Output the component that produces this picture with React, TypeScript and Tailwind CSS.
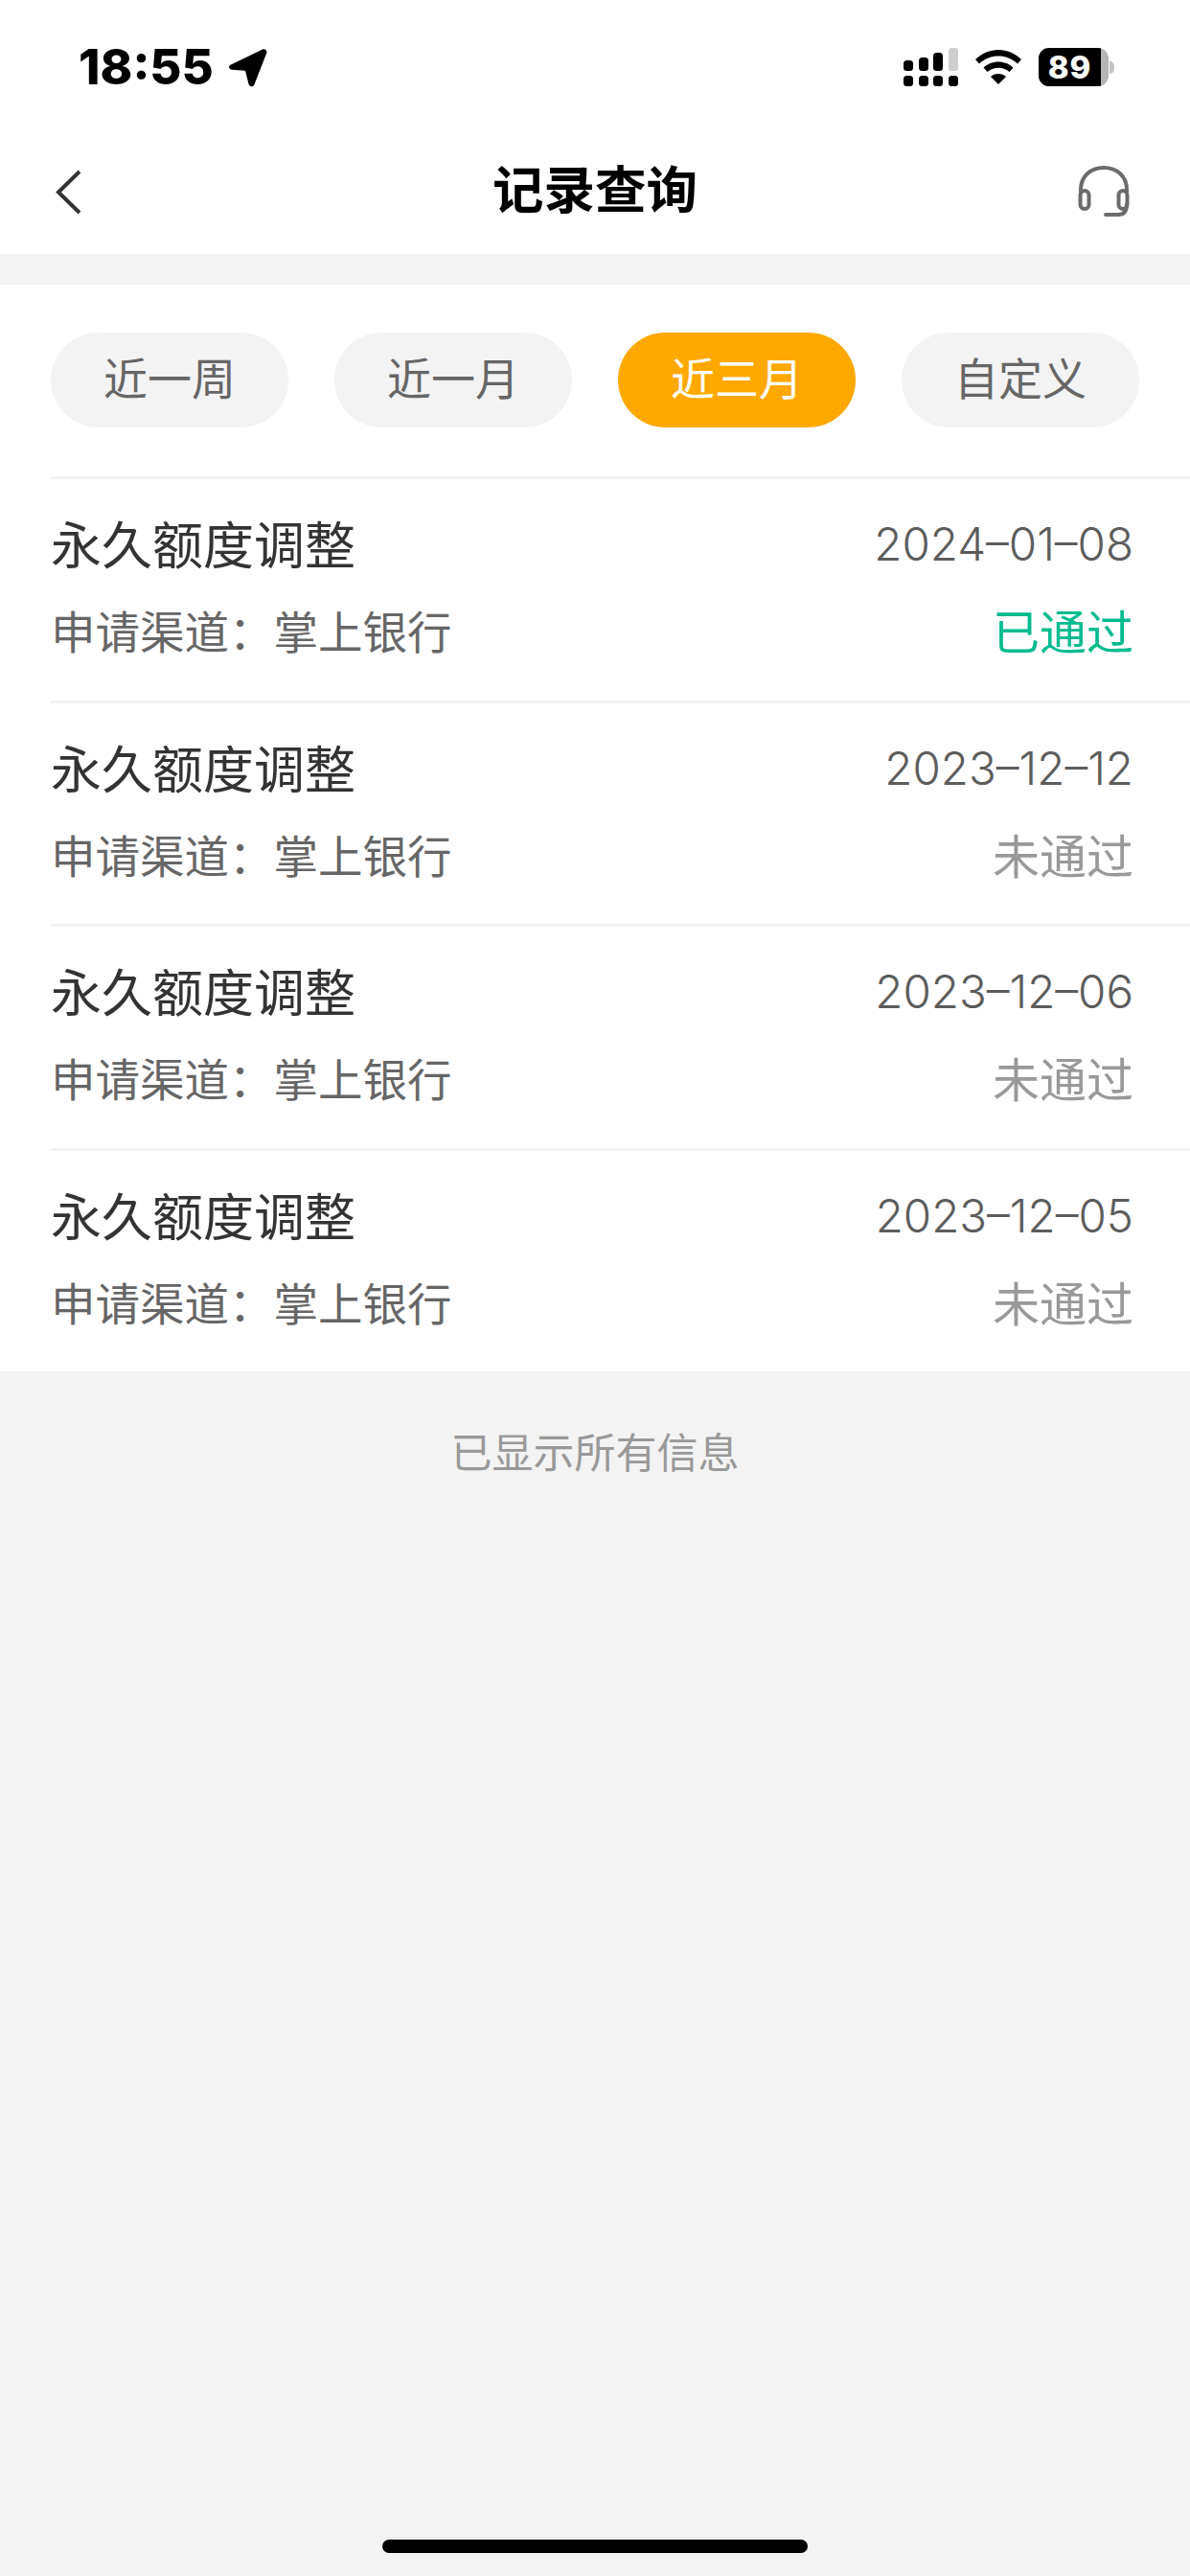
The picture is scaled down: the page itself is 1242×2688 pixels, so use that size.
const cjk = "font-['Liberation_Sans','Noto_Sans_CJK_SC',sans-serif]"

const tabs = [
  { label: '近一周', active: false },
  { label: '近一月', active: false },
  { label: '近三月', active: true },
  { label: '自定义', active: false },
]

const records = [
  { date: '2024–01–08', status: '已通过', passed: true },
  { date: '2023–12–12', status: '未通过', passed: false },
  { date: '2023–12–06', status: '未通过', passed: false },
  { date: '2023–12–05', status: '未通过', passed: false },
]

function SignalIcon() {
  return (
    <svg width="57" height="40" viewBox="0 0 57 40">
      <rect x="0" y="13" width="10" height="11" rx="3.5" fill="#000" />
      <rect x="16" y="10" width="10" height="14" rx="3.5" fill="#000" />
      <rect x="31" y="5" width="10" height="19" rx="3.5" fill="#000" />
      <rect x="47" y="0" width="10" height="24" rx="3" fill="#cfcfcf" />
      <rect x="0" y="29" width="10" height="11" rx="3.5" fill="#000" />
      <rect x="16" y="29" width="10" height="11" rx="3.5" fill="#000" />
      <rect x="31" y="29" width="10" height="11" rx="3.5" fill="#000" />
      <rect x="47" y="29" width="10" height="11" rx="3.5" fill="#000" />
    </svg>
  )
}

function WifiIcon() {
  return (
    <svg width="48" height="36" viewBox="0 0 48 36">
      <path d="M24 0C15 0 7 3.500 0 10l4 4.500C10 9 17 6.500 24 6.500S38 9 44 14.500l4-4.500C41 3.500 33 0 24 0z" fill="#000" />
      <path d="M24 12.500c-6 0-11.500 2.200-15.500 6l4 4.500c3-2.700 7-4.300 11.500-4.300s8.500 1.600 11.500 4.300l4-4.500c-4-3.800-9.500-6-15.500-6z" fill="#000" />
      <path d="M24 25c-3.200 0-6 1.200-8 3l8 8 8-8c-2-1.800-4.800-3-8-3z" fill="#000" />
    </svg>
  )
}

function BatteryIcon() {
  return (
    <div className="flex items-center">
      <div className="relative flex h-[40px] w-[73px] overflow-hidden rounded-[11px] bg-[#b5b5b5]">
        <div className="flex h-full w-[65px] items-center justify-center bg-black">
          <span className="font-['Inter',sans-serif] text-[33px] leading-none font-extrabold tracking-[1px] text-white">89</span>
        </div>
      </div>
      <div className="ml-[1px] h-[13px] w-[5px] rounded-r-full bg-[#c4c4c4]" />
    </div>
  )
}

function StatusBar() {
  return (
    <div className="flex h-[101px] items-center justify-between pt-[39px] pr-[79px] pl-[82px]">
      <div className="flex items-center gap-[15px]">
        <span className="font-['Inter',sans-serif] text-[51px] leading-[62px] font-extrabold text-black">18:55</span>
        <svg width="42" height="41" viewBox="0 0 42 41">
          <path d="M3 17.500 36 1.500c2.800-1.200 5.300 1.300 4.200 4.100L27.500 38c-1.300 3.300-5.200 3-6-.4l-3.500-13.800L3.800 22.700C.4 22 0 19 3 17.500z" fill="#000" />
        </svg>
      </div>
      <div className="flex items-center gap-[18px]">
        <SignalIcon />
        <WifiIcon />
        <BatteryIcon />
      </div>
    </div>
  )
}

function NavBar() {
  return (
    <div className="flex h-[164px] items-center justify-between pt-[34px] pr-[63px] pl-[58px]">
      <div className="w-[54px]">
        <svg width="27" height="47" viewBox="0 0 27 47" fill="none">
          <path d="M25 2 3 23.500 25 45" stroke="#333" strokeWidth="4" />
        </svg>
      </div>
      <h1 className={`${cjk} ml-[5px] text-[53.500px] font-bold text-black`}>记录查询</h1>
      <svg width="54" height="54" viewBox="0 0 54 54" fill="none" stroke="#6b6b6b" strokeWidth="4" strokeLinecap="round">
        <path d="M3 27V25C3 11 13 2 27 2s24 9 24 23v2" />
        <rect x="2.500" y="26" width="9" height="19" rx="4.500" />
        <rect x="42.500" y="26" width="9" height="19" rx="4.500" />
        <path d="M51 40c0 7-3 11-9 11H29" />
      </svg>
    </div>
  )
}

export default function App() {
  return (
    <div className={`${cjk} flex min-h-[2688px] flex-col bg-[#f3f3f3]`}>
      <div className="bg-white">
        <StatusBar />
        <NavBar />
      </div>

      <div className="mt-[32px] bg-white">
        <div className="flex justify-between pt-[50px] pr-[53px] pb-[51px] pl-[53px]">
          {tabs.map(t => (
            <div
              key={t.label}
              className={`flex h-[99px] w-[248px] items-center justify-center rounded-full text-[46px] ${
                t.active ? 'bg-[#ffa800] text-white' : 'bg-[#f3f3f3] text-[#666666]'
              }`}
            >
              {t.label}
            </div>
          ))}
        </div>

        {records.map(r => (
          <div key={r.date} className="ml-[53px] h-[233.500px] border-t-[3px] border-[#f3f3f3] pr-[59px]">
            <div className="flex items-center justify-between pt-[35px]">
              <span className="text-[53px] leading-[72px] text-[#333333]">永久额度调整</span>
              <span className="pb-[6px] font-['Inter',sans-serif] text-[47.500px] leading-[66px] font-light text-[#5c5c5c]">{r.date}</span>
            </div>
            <div className="flex items-center justify-between pt-[23px]">
              <span className="text-[46.500px] leading-[62px] text-[#666666]">申请渠道：掌上银行</span>
              <span className={`text-[49px] leading-[62px] ${r.passed ? 'text-[#00bb8e]' : 'text-[#999999]'}`}>
                {r.status}
              </span>
            </div>
          </div>
        ))}
      </div>

      <p className="pt-[58px] text-center text-[43px] leading-[56px] text-[#999999]">已显示所有信息</p>

      <div className="fixed bottom-[24px] left-[399px] h-[14px] w-[444px] rounded-full bg-black" />
    </div>
  )
}
